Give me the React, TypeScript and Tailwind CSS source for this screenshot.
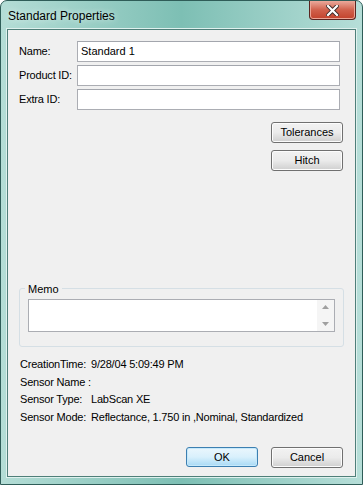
import React from 'react';

const ui = { fontFamily: '"Liberation Sans", Arial, sans-serif' };

function Field({ label, value }: { label: string; value?: string }) {
  return (
    <div className="flex h-[21px] items-center">
      <span className="w-[69px] shrink-0 whitespace-nowrap pl-[11px] text-[11px] tracking-[-0.2px] text-black">{label}</span>
      <div className="flex h-[21px] w-[263px] items-center border border-[#abadb3] border-t-[#a3a6ad] bg-white pl-[3px] text-[11px] text-black">
        {value}
      </div>
    </div>
  );
}

function Btn({ label, focused }: { label: string; focused?: boolean }) {
  return (
    <button
      type="button"
      className={
        focused
          ? 'flex h-[20px] w-[72px] items-center justify-center rounded-[3px] border border-[#3c7fb1] bg-gradient-to-b from-[#eaf6fd] via-[#d9f0fc] to-[#a7d9f5] text-[11px] text-black shadow-[inset_0_0_0_1px_#c6e9fb]'
          : 'flex h-[21px] w-[72px] items-center justify-center rounded-[3px] border border-[#707070] bg-gradient-to-b from-[#f2f2f2] via-[#ebebeb] to-[#cfcfcf] text-[11px] text-black shadow-[inset_0_0_0_1px_#fcfcfc]'
      }
    >
      {label}
    </button>
  );
}

function Info({ label, value }: { label: string; value?: string }) {
  return (
    <div className="flex h-[17px] items-center whitespace-nowrap text-[11px] tracking-[-0.2px] text-black">
      <span className="w-[71px] shrink-0">{label}</span>
      <span>{value}</span>
    </div>
  );
}

export default function App() {
  return (
    <div style={ui} className="h-[485px] w-[363px] bg-white">
      <div className="flex h-full w-full flex-col rounded-t-[7px] border border-[#2f5d58] bg-gradient-to-r from-[#b4ddd6] via-[#7dbfb4] to-[#b6ded8] px-[6px] pb-[7px]">
        {/* title bar */}
        <div className="flex h-[28px] shrink-0 items-start justify-between">
          <span className="pl-[1px] pt-[6px] text-[12px] text-black" style={{ textShadow: '0 0 6px #e8f6f3' }}>
            Standard Properties
          </span>
          <div className="flex h-[19px] w-[47px] items-center justify-center rounded-b-[4px] border border-t-0 border-[#5a2420] bg-gradient-to-b from-[#e9a99c] via-[#d0604b] to-[#c3412b] shadow-[inset_0_0_0_1px_#eba596]">
            <svg width="13" height="11" viewBox="0 0 13 11">
              <path d="M2 1 L11 10 M11 1 L2 10" stroke="#3b2a28" strokeWidth="4" strokeLinecap="square" />
              <path d="M2 1 L11 10 M11 1 L2 10" stroke="#ffffff" strokeWidth="2.2" strokeLinecap="square" />
            </svg>
          </div>
        </div>

        {/* client area */}
        <div className="flex flex-1 flex-col border border-[#4f7f79] bg-[#f0f0f0] shadow-[0_0_0_1px_#dff1ee]">
          <div className="flex flex-col gap-[3px] pt-[11px]">
            <Field label="Name:" value="Standard 1" />
            <Field label="Product ID:" />
            <Field label="Extra ID:" />
          </div>

          <div className="flex flex-col items-end gap-[7px] pr-[12px] pt-[12px]">
            <Btn label="Tolerances" />
            <Btn label="Hitch" />
          </div>

          <div className="h-[117px] shrink-0" />

          {/* memo group */}
          <div className="relative mx-[11px] h-[59px] shrink-0 rounded-[3px] border border-[#d5dfe5] pt-[10px]">
            <span className="absolute left-[5px] top-[-8px] bg-[#f0f0f0] px-[3px] text-[11px] text-black">Memo</span>
            <div className="mx-[8px] flex h-[33px] border border-[#abadb3] bg-white">
              <div className="flex-1" />
              <div className="flex w-[17px] flex-col items-center justify-between bg-[#f5f5f5] py-[5px]">
                <svg width="7" height="4" viewBox="0 0 7 4">
                  <path d="M0 4 L3.5 0 L7 4 Z" fill="#a0a0a0" />
                </svg>
                <svg width="7" height="4" viewBox="0 0 7 4">
                  <path d="M0 0 L3.5 4 L7 0 Z" fill="#a0a0a0" />
                </svg>
              </div>
            </div>
          </div>

          <div className="flex flex-col gap-[0.5px] pl-[12px] pt-[9px]">
            <Info label="CreationTime:" value="9/28/04 5:09:49 PM" />
            <Info label="Sensor Name :" />
            <Info label="Sensor Type:" value="LabScan XE" />
            <Info label="Sensor Mode:" value="Reflectance, 1.750 in ,Nominal, Standardized" />
          </div>

          <div className="flex-1" />

          <div className="flex justify-end gap-[13px] pb-[8px] pr-[12px]">
            <Btn label="OK" focused />
            <Btn label="Cancel" />
          </div>
        </div>
      </div>
    </div>
  );
}
